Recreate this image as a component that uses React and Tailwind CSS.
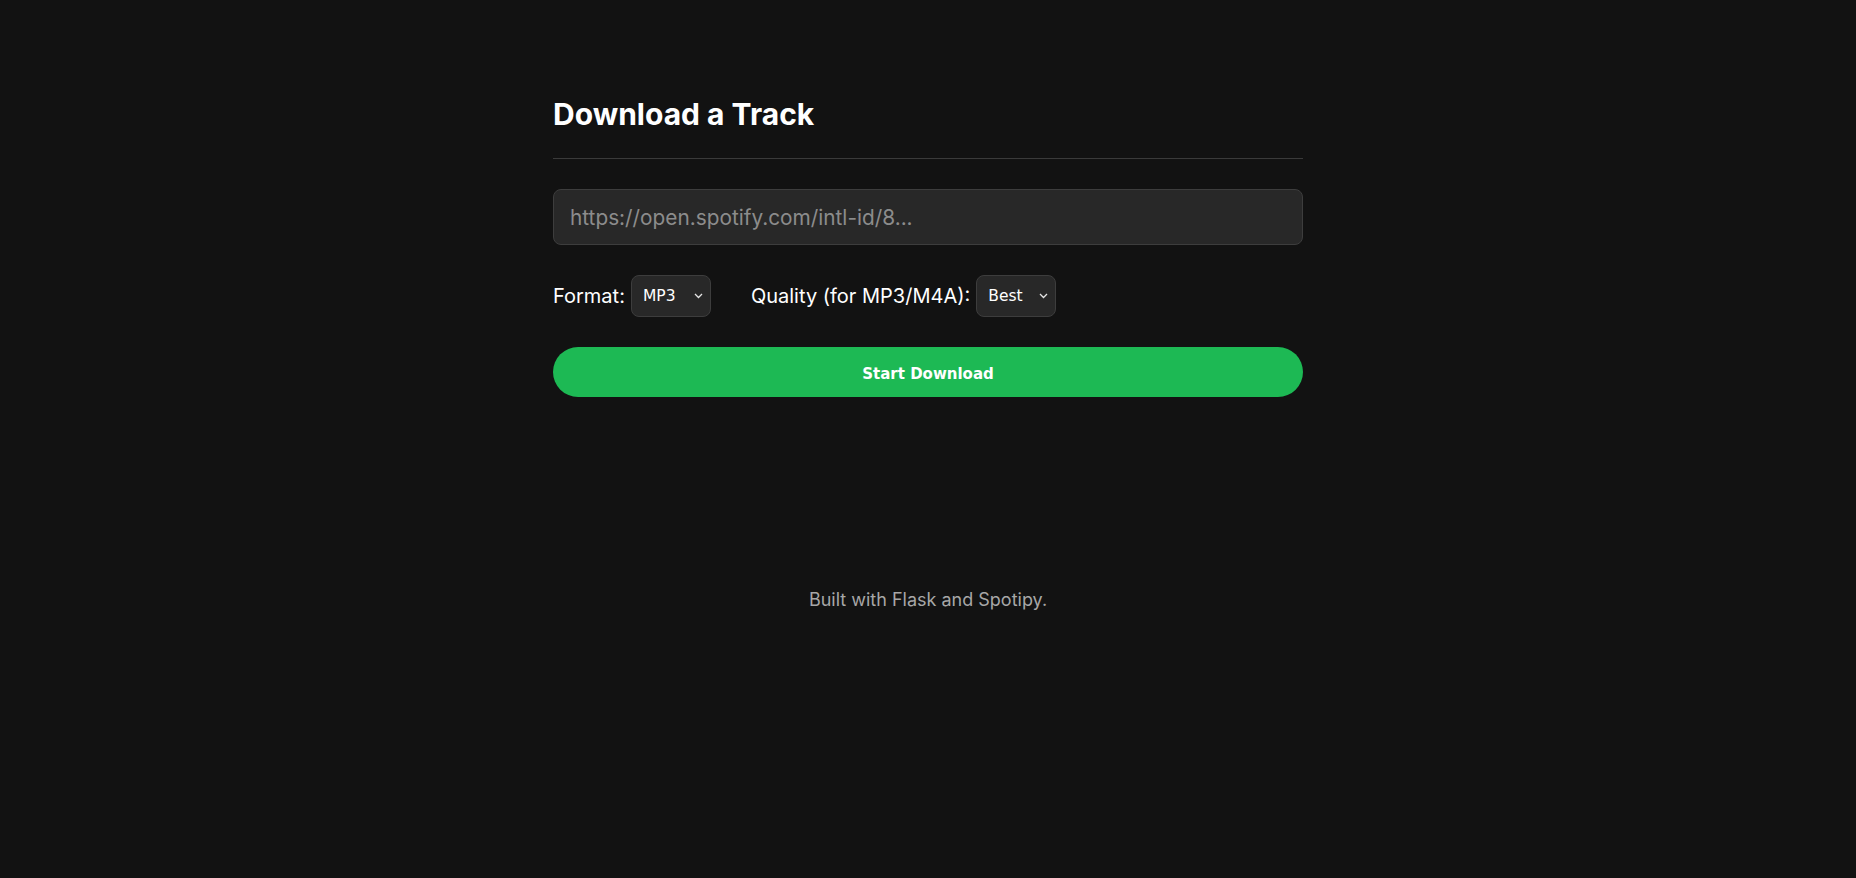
function Chevron() {
    return (
        <svg
            className="pointer-events-none absolute right-[8px] top-1/2 -translate-y-1/2"
            width="9"
            height="6"
            viewBox="0 0 9 6"
            fill="none"
        >
            <path d="M1 1l3.5 3.5L8 1" stroke="#e5e5e5" strokeWidth="1.3" />
        </svg>
    );
}

function Select({ value, options }) {
    return (
        <div className="relative">
            <select
                defaultValue={value}
                className="appearance-none w-[80px] h-[42px] pl-[11px] pr-6 pt-[2px] rounded-lg bg-[#282828] border border-[#3d3d3d] text-[15.5px] text-white font-['DejaVu_Sans',sans-serif] outline-none"
            >
                {options.map((o) => (
                    <option key={o}>{o}</option>
                ))}
            </select>
            <Chevron />
        </div>
    );
}

export default function App() {
    return (
        <div className="min-h-screen bg-[#121212] font-['Inter',sans-serif] text-white">
            <div className="max-w-[750px] mx-auto pt-[95px]">
                <h1 className="text-[30px] leading-[39px] font-bold pb-[24px] border-b border-[#3a3a3a]">
                    Download a Track
                </h1>

                <input
                    type="text"
                    placeholder="https://open.spotify.com/intl-id/8..."
                    className="mt-[30px] block w-full h-[56px] px-4 rounded-lg bg-[#282828] border border-[#3d3d3d] text-[20.8px] text-white placeholder:text-[#8c8c8c] outline-none"
                />

                <div className="mt-[30px] flex items-center">
                    <label className="text-[20px] mr-[6px]">Format:</label>
                    <Select value="MP3" options={["MP3", "M4A", "FLAC", "WAV"]} />
                    <label className="text-[20px] ml-[40px] mr-[6px]">Quality (for MP3/M4A):</label>
                    <Select value="Best" options={["Best", "320", "256", "192", "128"]} />
                </div>

                <button className="mt-[30px] w-full h-[50px] pt-[4px] rounded-full bg-[#1db954] text-white text-[15px] font-bold font-['DejaVu_Sans',sans-serif]">
                    Start Download
                </button>

                <p className="mt-[191px] text-center text-[18px] leading-6 text-[#a7a7a7]">
                    Built with Flask and Spotipy.
                </p>
            </div>
        </div>
    );
}
